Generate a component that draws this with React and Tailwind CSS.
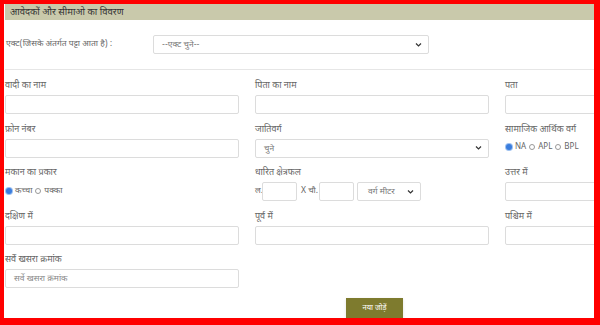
const font = { fontFamily: '"Noto Sans Devanagari", "Noto Sans", "Liberation Sans", sans-serif' };

function Radio({ checked, label }) {
  return (
    <span className="flex items-center gap-[3px]">
      {checked ? (
        <span className="w-[6px] h-[6px] rounded-full bg-[#3b7ddd] ring-1 ring-[#9cc0f0]" />
      ) : (
        <span className="w-[6px] h-[6px] rounded-full border border-[#999]" />
      )}
      <span>{label}</span>
    </span>
  );
}

function Chevron() {
  return (
    <svg width="7" height="5" viewBox="0 0 7 5" className="absolute right-[6px] top-1/2 -translate-y-1/2">
      <path d="M1 1 L3.5 3.5 L6 1" fill="none" stroke="#333" strokeWidth="1.2" />
    </svg>
  );
}

function Field({ label, children }) {
  return (
    <div className="flex flex-col">
      <div className="h-[16px] leading-[20px] text-[9px] text-[#666] mb-[3px] whitespace-nowrap">{label}</div>
      {children}
    </div>
  );
}

function TextBox({ placeholder }) {
  return (
    <div className="h-[19px] border border-[#dcdcdc] rounded-[2px] bg-white text-[8.5px] text-[#888] pl-[8px] leading-[17px]">
      {placeholder}
    </div>
  );
}

function SelectBox({ text, className }) {
  return (
    <div className={"relative h-[19px] border border-[#dcdcdc] rounded-[2px] bg-white text-[8.5px] text-[#777] leading-[17px] " + className}>
      {text}
      <Chevron />
    </div>
  );
}

export default function App() {
  return (
    <div className="w-[600px] h-[325px] overflow-hidden border-l-4 border-t-4 border-r-[6px] border-b-[7px] border-[#ff0000] bg-white" style={font}>
      <div className="w-[740px] pl-[1px]">
        <div className="h-[16px] bg-[#c9c9ab] text-[9.5px] text-[#333] pl-[5px] leading-[17px]">
          आवेदकों और सीमाओ का विवरण
        </div>
        <div className="flex items-center h-[50px] pl-[1px] border-b border-[#e6e6e6]">
          <span className="w-[147px] text-[8.5px] text-[#666] whitespace-nowrap">एक्ट(जिसके अंतर्गत पट्टा आता है) :</span>
          <SelectBox text="--एक्ट चुने--" className="w-[276px] h-[18px] pl-[8px]" />
        </div>
        <div className="grid grid-cols-[234px_234px_234px] gap-x-[16px] gap-y-[5.5px] pt-[6px]">
          <Field label="वादी का नाम"><TextBox /></Field>
          <Field label="पिता का नाम"><TextBox /></Field>
          <Field label="पता"><TextBox /></Field>

          <Field label="फ़ोन नंबर"><TextBox /></Field>
          <Field label="जातिवर्ग"><SelectBox text="चुने" className="pl-[8px]" /></Field>
          <Field label="सामाजिक आर्थिक वर्ग">
            <div className="h-[17px] flex items-center gap-[3px] text-[8px] text-[#666] pl-[1px]">
              <Radio checked label="NA" />
              <Radio label="APL" />
              <Radio label="BPL" />
            </div>
          </Field>

          <Field label="मकान का प्रकार">
            <div className="h-[18px] flex items-center gap-[3px] text-[8.5px] text-[#666] pl-[1px]">
              <Radio checked label="कच्चा" />
              <Radio label="पक्का" />
            </div>
          </Field>
          <Field label="धारित क्षेत्रफल">
            <div className="flex items-center text-[8.5px] text-[#666]">
              <span className="w-[7px]">ल.</span>
              <div className="w-[35px] h-[19px] border border-[#dcdcdc] rounded-[2px]" />
              <span className="ml-[4px] mr-[1px] whitespace-nowrap">X चौ.</span>
              <div className="w-[35px] h-[19px] border border-[#dcdcdc] rounded-[2px]" />
              <SelectBox text="वर्ग मीटर" className="ml-[3px] w-[64px] pl-[10px]" />
            </div>
          </Field>
          <Field label="उत्तर में"><TextBox /></Field>

          <Field label="दक्षिण में"><TextBox /></Field>
          <Field label="पूर्व में"><TextBox /></Field>
          <Field label="पश्चिम में"><TextBox /></Field>

          <Field label="सर्वे खसरा क्रमांक"><TextBox placeholder="सर्वे खसरा क्रमांक" /></Field>
        </div>
        <div className="flex justify-center pt-[10px]">
          <button className="w-[57px] h-[22px] bg-[#7e7b2e] text-white text-[7.5px] shadow-sm">नया जोड़ें</button>
        </div>
      </div>
    </div>
  );
}
